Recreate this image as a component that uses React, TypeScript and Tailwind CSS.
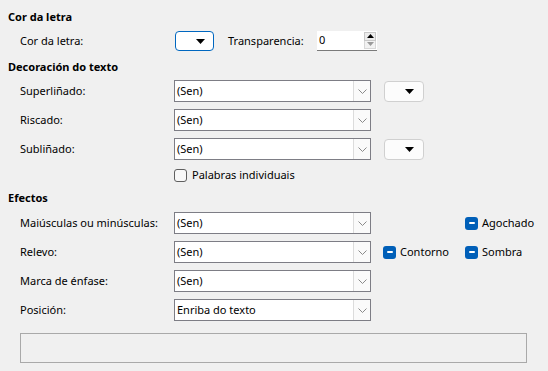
import React from "react";

const font = { fontFamily: '"Noto Sans", "Segoe UI", sans-serif' };

function Combo({ value }: { value: string }) {
  return (
    <div className="flex h-[22px] w-[197px] items-stretch border border-[#7d7d85] bg-white">
      <div className="flex flex-1 items-center pl-[2px] text-[11px] text-black">{value}</div>
      <div className="flex w-[17px] items-center justify-center border-l border-[#dcdcdc] bg-[#fafafa]">
        <svg width="9" height="5" viewBox="0 0 9 5">
          <path d="M0.5 0.5 L4.5 4.5 L8.5 0.5" fill="none" stroke="#8a8a8a" strokeWidth="1" />
        </svg>
      </div>
    </div>
  );
}

function Tri({ color = "#000" }: { color?: string }) {
  return (
    <svg width="9" height="5" viewBox="0 0 9 5">
      <path d="M0 0 H9 L4.5 5 Z" fill={color} />
    </svg>
  );
}

function ColorDrop() {
  return (
    <div className="ml-[13px] flex h-[21px] w-[40px] items-center justify-end rounded-[4px] border border-[#d0d0d0] bg-[#fcfcfc] pr-[9px]">
      <Tri />
    </div>
  );
}

function Tri3() {
  return (
    <div className="mr-[3px] flex h-[13px] w-[13px] items-center justify-center rounded-[3px] bg-[#005fb8]">
      <div className="h-[2px] w-[6px] rounded-[1px] bg-white" />
    </div>
  );
}

function Label({ children }: { children: React.ReactNode }) {
  return <div className="w-[154px] text-[11px] text-black">{children}</div>;
}

export default function App() {
  return (
    <div className="h-[371px] w-[548px] overflow-hidden bg-[#f0f0f0] text-[11px] text-black" style={font}>
      <div className="mt-[8px] flex h-[18px] items-center pl-[8px] font-bold">Cor da letra</div>
      <div className="mt-[5px] flex h-[20px] items-center pl-[20px]">
        <Label>Cor da letra:</Label>
        <div className="ml-[1px] flex h-[20px] w-[39px] items-center justify-end rounded-[4px] border border-[#0067c0] bg-white pr-[8px]">
          <Tri />
        </div>
        <div className="ml-[14px] w-[89px]">Transparencia:</div>
        <div className="flex h-[20px] w-[60px] items-stretch border-b border-[#7a7a7a] bg-white">
          <div className="flex flex-1 items-center pl-[2px]">0</div>
          <div className="mr-[1px] flex w-[12px] flex-col justify-center py-[1px]">
            <div className="flex h-[9px] items-center justify-center border border-[#c8c8c8] bg-[#ececec]">
              <svg width="7" height="4" viewBox="0 0 7 4"><path d="M0 4 H7 L3.5 0 Z" fill="#000" /></svg>
            </div>
            <div className="flex h-[9px] items-center justify-center border border-t-0 border-[#d8d8d8] bg-[#f2f2f2]">
              <svg width="7" height="4" viewBox="0 0 7 4"><path d="M0 0 H7 L3.5 4 Z" fill="#9a9a9a" /></svg>
            </div>
          </div>
        </div>
      </div>

      <div className="mt-[7px] flex h-[18px] items-center pl-[8px] font-bold">Decoración do texto</div>
      <div className="mt-[4px] flex h-[22px] items-center pl-[20px]">
        <Label>Superliñado:</Label>
        <Combo value="(Sen)" />
        <ColorDrop />
      </div>
      <div className="mt-[7px] flex h-[22px] items-center pl-[20px]">
        <Label>Riscado:</Label>
        <Combo value="(Sen)" />
      </div>
      <div className="mt-[7px] flex h-[22px] items-center pl-[20px]">
        <Label>Subliñado:</Label>
        <Combo value="(Sen)" />
        <ColorDrop />
      </div>
      <div className="mt-[8px] flex h-[14px] items-center pl-[174px]">
        <div className="h-[13px] w-[13px] rounded-[3px] border border-[#5f5f5f] bg-[#f8f8f8]" />
        <div className="ml-[5px]">Palabras individuais</div>
      </div>

      <div className="mt-[7px] flex h-[18px] items-center pl-[8px] font-bold">Efectos</div>
      <div className="mt-[5px] flex h-[22px] items-center pl-[20px]">
        <Label>Maiúsculas ou minúsculas:</Label>
        <Combo value="(Sen)" />
        <div className="ml-[94px] flex items-center">
          <Tri3 />
          <span className="ml-[1px]">Agochado</span>
        </div>
      </div>
      <div className="mt-[7px] flex h-[22px] items-center pl-[20px]">
        <Label>Relevo:</Label>
        <Combo value="(Sen)" />
        <div className="ml-[12px] flex w-[82px] items-center">
          <Tri3 />
          <span className="ml-[1px]">Contorno</span>
        </div>
        <div className="flex items-center">
          <Tri3 />
          <span className="ml-[1px]">Sombra</span>
        </div>
      </div>
      <div className="mt-[7px] flex h-[22px] items-center pl-[20px]">
        <Label>Marca de énfase:</Label>
        <Combo value="(Sen)" />
      </div>
      <div className="mt-[7px] flex h-[22px] items-center pl-[20px]">
        <Label>Posición:</Label>
        <Combo value="Enriba do texto" />
      </div>
      <div className="ml-[20px] mt-[12px] h-[30px] w-[507px] border border-[#a9a9a9]" />
    </div>
  );
}
